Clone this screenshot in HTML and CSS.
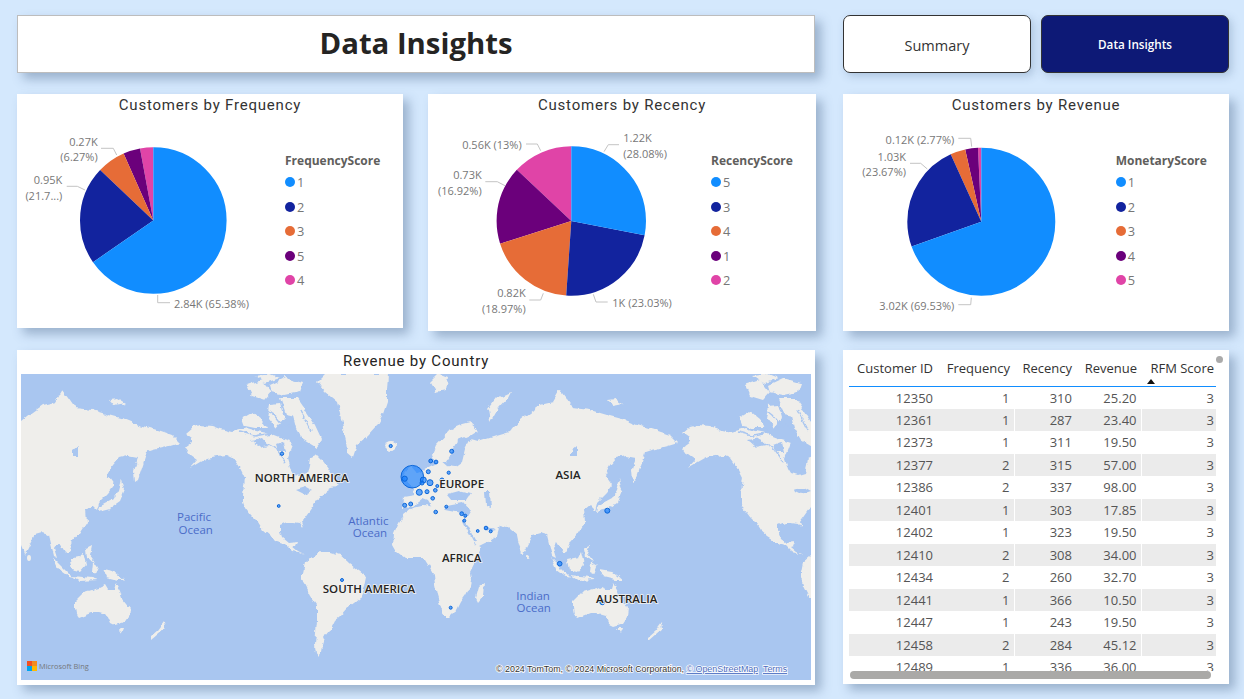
FILE: index.html
```html
<!DOCTYPE html>
<html lang="en">
<head>
    <meta charset="UTF-8">
    <meta name="viewport" content="width=device-width, initial-scale=1.0">
    <title>Data Insights</title>
    <link rel="stylesheet" href="styles.css">
</head>
<body>
    <div class="page">

        <div class="row row-top">
            <div class="page-title">Data Insights</div>
            <div class="nav-btn">Summary</div>
            <div class="nav-btn active">Data Insights</div>
        </div>

        <div class="row row-charts">
            <div class="card chart-card card-freq">
                <div class="card-title">Customers by Frequency</div>
                <div class="chart-body">
                    <svg class="pie pie-freq" viewBox="17 116 260 212">
                        <g transform="rotate(-90 153.3 220.5)">
                            <circle class="s-pink" cx="153.3" cy="220.5" r="36.65" stroke-width="73.3" pathLength="100" stroke-dasharray="2.9 100" stroke-dashoffset="-97.1"/>
                            <circle class="s-purple" cx="153.3" cy="220.5" r="36.65" stroke-width="73.3" pathLength="100" stroke-dasharray="3.75 100" stroke-dashoffset="-93.35"/>
                            <circle class="s-orange" cx="153.3" cy="220.5" r="36.65" stroke-width="73.3" pathLength="100" stroke-dasharray="6.27 100" stroke-dashoffset="-87.08"/>
                            <circle class="s-navy" cx="153.3" cy="220.5" r="36.65" stroke-width="73.3" pathLength="100" stroke-dasharray="21.7 100" stroke-dashoffset="-65.38"/>
                            <circle class="s-blue" cx="153.3" cy="220.5" r="36.65" stroke-width="73.3" pathLength="100" stroke-dasharray="65.38 100"/>
                        </g>
                        <polyline class="leader" points="101,148.3 113.3,148.3 116.7,155"/>
                        <polyline class="leader" points="66.7,186.3 77.3,186.3 85,190"/>
                        <polyline class="leader" points="157.7,295 157.7,302.7 170,302.7"/>
                        <text class="lbl end" x="97.7" y="145.7">0.27K</text>
                        <text class="lbl end" x="97.7" y="160.7">(6.27%)</text>
                        <text class="lbl end" x="62.3" y="183.7">0.95K</text>
                        <text class="lbl end" x="62.3" y="200">(21.7...)</text>
                        <text class="lbl" x="174" y="307.7">2.84K (65.38%)</text>
                    </svg>
                    <div class="legend">
                        <div class="legend-title">FrequencyScore</div>
                        <div class="legend-item"><span class="dot d-blue"></span>1</div>
                        <div class="legend-item"><span class="dot d-navy"></span>2</div>
                        <div class="legend-item"><span class="dot d-orange"></span>3</div>
                        <div class="legend-item"><span class="dot d-purple"></span>5</div>
                        <div class="legend-item"><span class="dot d-pink"></span>4</div>
                    </div>
                </div>
            </div>

            <div class="card chart-card card-rec">
                <div class="card-title">Customers by Recency</div>
                <div class="chart-body">
                    <svg class="pie pie-rec" viewBox="428 116 278 215">
                        <g transform="rotate(-90 571.3 221)">
                            <circle class="s-pink" cx="571.3" cy="221" r="37.35" stroke-width="74.7" pathLength="100" stroke-dasharray="13 100" stroke-dashoffset="-87"/>
                            <circle class="s-purple" cx="571.3" cy="221" r="37.35" stroke-width="74.7" pathLength="100" stroke-dasharray="16.92 100" stroke-dashoffset="-70.08"/>
                            <circle class="s-orange" cx="571.3" cy="221" r="37.35" stroke-width="74.7" pathLength="100" stroke-dasharray="18.97 100" stroke-dashoffset="-51.11"/>
                            <circle class="s-navy" cx="571.3" cy="221" r="37.35" stroke-width="74.7" pathLength="100" stroke-dasharray="23.03 100" stroke-dashoffset="-28.08"/>
                            <circle class="s-blue" cx="571.3" cy="221" r="37.35" stroke-width="74.7" pathLength="100" stroke-dasharray="28.08 100"/>
                        </g>
                        <polyline class="leader" points="604,151.7 608.3,144.7 619,144.7"/>
                        <polyline class="leader" points="526,144 537.3,144 540.7,150.7"/>
                        <polyline class="leader" points="485.3,181.7 497.3,181.7 505,185.7"/>
                        <polyline class="leader" points="529.3,300 540.7,300 543.3,293.3"/>
                        <polyline class="leader" points="593.3,294.3 596,302 607.7,302"/>
                        <text class="lbl" x="623.3" y="141.7">1.22K</text>
                        <text class="lbl" x="623.3" y="157.7">(28.08%)</text>
                        <text class="lbl end" x="521.7" y="148.7">0.56K (13%)</text>
                        <text class="lbl end" x="481.7" y="178.7">0.73K</text>
                        <text class="lbl end" x="481.7" y="194.7">(16.92%)</text>
                        <text class="lbl end" x="525.7" y="296.7">0.82K</text>
                        <text class="lbl end" x="525.7" y="312.7">(18.97%)</text>
                        <text class="lbl" x="612.3" y="307">1K (23.03%)</text>
                    </svg>
                    <div class="legend">
                        <div class="legend-title">RecencyScore</div>
                        <div class="legend-item"><span class="dot d-blue"></span>5</div>
                        <div class="legend-item"><span class="dot d-navy"></span>3</div>
                        <div class="legend-item"><span class="dot d-orange"></span>4</div>
                        <div class="legend-item"><span class="dot d-purple"></span>1</div>
                        <div class="legend-item"><span class="dot d-pink"></span>2</div>
                    </div>
                </div>
            </div>

            <div class="card chart-card card-rev">
                <div class="card-title">Customers by Revenue</div>
                <div class="chart-body">
                    <svg class="pie pie-rev" viewBox="843 116 267 215">
                        <g transform="rotate(-90 981.3 221.7)">
                            <circle class="s-pink" cx="981.3" cy="221.7" r="37" stroke-width="74" pathLength="100" stroke-dasharray="0.73 100" stroke-dashoffset="-99.27"/>
                            <circle class="s-purple" cx="981.3" cy="221.7" r="37" stroke-width="74" pathLength="100" stroke-dasharray="2.77 100" stroke-dashoffset="-96.5"/>
                            <circle class="s-orange" cx="981.3" cy="221.7" r="37" stroke-width="74" pathLength="100" stroke-dasharray="3.3 100" stroke-dashoffset="-93.2"/>
                            <circle class="s-navy" cx="981.3" cy="221.7" r="37" stroke-width="74" pathLength="100" stroke-dasharray="23.67 100" stroke-dashoffset="-69.53"/>
                            <circle class="s-blue" cx="981.3" cy="221.7" r="37" stroke-width="74" pathLength="100" stroke-dasharray="69.53 100"/>
                        </g>
                        <polyline class="leader" points="958.3,138.3 970.7,138.3 971.7,146.7"/>
                        <polyline class="leader" points="910,163.3 920.7,163.3 927.3,169"/>
                        <polyline class="leader" points="958.3,304.7 970.7,304.7 971.3,297.7"/>
                        <text class="lbl end" x="954.3" y="143.7">0.12K (2.77%)</text>
                        <text class="lbl end" x="906" y="160.7">1.03K</text>
                        <text class="lbl end" x="906" y="176">(23.67%)</text>
                        <text class="lbl end" x="954.3" y="309.7">3.02K (69.53%)</text>
                    </svg>
                    <div class="legend">
                        <div class="legend-title">MonetaryScore</div>
                        <div class="legend-item"><span class="dot d-blue"></span>1</div>
                        <div class="legend-item"><span class="dot d-navy"></span>2</div>
                        <div class="legend-item"><span class="dot d-orange"></span>3</div>
                        <div class="legend-item"><span class="dot d-purple"></span>4</div>
                        <div class="legend-item"><span class="dot d-pink"></span>5</div>
                    </div>
                </div>
            </div>
        </div>

        <div class="row row-bottom">
            <div class="card map-card">
                <div class="card-title">Revenue by Country</div>
                <svg class="map" viewBox="21 374 790 306">
                    <defs>
                        <filter id="rough" x="-2%" y="-2%" width="104%" height="104%" color-interpolation-filters="sRGB">
                            <feTurbulence type="fractalNoise" baseFrequency="0.11" numOctaves="3" seed="4" result="noise"/>
                            <feDisplacementMap in="SourceGraphic" in2="noise" scale="6" xChannelSelector="R" yChannelSelector="G"/>
                            <feGaussianBlur stdDeviation="0.35"/>
                        </filter>
                        <g id="world">
                            <!-- north america -->
                            <polygon class="land" points="185,433 192,427 200,425 212,426 220,429 233,432 247,428 257,431 267,433 280,438 287,440 293,442 290,450 287,458 290,468 293,473 300,475 307,473 309,465 310,458 317,455 323,461 328,468 334,477 338,487 332,488 326,492 320,495 317,501 312,508 307,515 302,522 304,528 300,523 293,522 287,522 280,525 280,531 282,537 288,542 298,541 296,546 293,547 299,552 305,555 299,553 294,552 287,545 278,542 270,537 262,530 257,522 251,516 245,508 243,502 243,495 244,486 245,478 240,468 233,458 227,455 217,456 207,458 200,462 190,468 197,460 190,455 185,448 192,443 192,438"/>
                            <polygon class="land" points="242,418 252,412 262,420 267,428 255,428 245,426"/>
                            <polygon class="land" points="247,385 262,380 272,392 265,400 252,396"/>
                            <polygon class="land" points="270,385 285,378 303,383 300,392 285,395 272,392"/>
                            <polygon class="land" points="280,398 298,398 305,408 300,418 286,415"/>
                            <polygon class="land" points="292,412 305,410 315,425 322,440 316,448 303,440 296,428"/>
                            <polygon class="land" points="270,405 280,404 284,418 276,428 268,418"/>
                            <polygon class="land" points="255,376 270,374 280,378 265,383"/>
                            <polyline class="channel" points="240,432 255,436 270,433"/>
                            <polyline class="channel" points="270,430 290,425 300,438"/>
                            <polyline class="channel" points="262,405 275,415 283,425"/>
                            <polyline class="channel" points="300,410 310,430"/>
                            <polyline class="channel" points="260,440 275,448 285,462"/>
                            <polygon class="water" points="250,440 262,438 268,445 258,447"/>
                            <polygon class="water" points="276,445 284,442 286,452 278,452"/>
                            <polygon class="water" points="296,490 306,487 313,491 304,494"/>
                            <!-- greenland, iceland -->
                            <polygon class="land" points="317,382 325,374 388,374 387,390 387,402 383,414 377,425 367,436 357,445 353,457 347,452 346,440 343,428 340,414 337,402 325,392"/>
                            <ellipse class="land" cx="391" cy="446" rx="6" ry="4"/>
                            <!-- south america -->
                            <polygon class="land" points="305,562 312,556 320,552 330,552 340,555 348,562 355,568 367,577 365,587 360,598 354,603 347,608 340,616 333,622 329,630 325,635 322,645 320,657 316,652 315,645 316,632 317,622 317,612 317,605 310,595 305,585 303,578 303,572"/>
                            <!-- africa -->
                            <polygon class="land" points="393,545 394,533 398,524 403,515 412,508 425,505 435,507 445,510 455,512 463,515 465,522 470,533 475,545 482,547 477,558 470,572 471,580 470,585 465,595 460,602 455,612 450,617 444,617 441,608 437,595 435,585 434,575 430,568 425,560 420,558 413,558 405,558 397,552"/>
                            <polygon class="land" points="479,587 484,584 483,596 478,602 476,598"/>
                            <!-- eurasia -->
                            <polygon class="land" points="402,508 403,497 415,495 413,487 405,478 420,472 435,465 440,460 447,466 455,467 462,462 465,450 470,440 477,442 493,437 510,432 520,420 530,412 540,405 553,402 560,390 566,398 573,408 590,410 607,415 622,419 637,425 655,430 670,435 678,443 668,446 660,448 651,450 645,452 641,465 636,480 633,482 632,470 636,458 625,456 617,458 610,466 605,475 612,485 606,493 597,502 595,510 590,505 584,510 585,522 578,533 570,542 566,552 563,552 557,542 553,548 556,558 552,556 547,535 540,533 533,535 528,545 523,555 519,545 517,535 508,527 500,525 497,535 487,542 477,547 471,535 465,518 470,510 463,502 452,504 447,505 443,512 438,512 433,508 428,500 423,498 418,502 412,506"/>
                            <polygon class="land" points="432,455 436,445 450,430 462,425 470,423 478,430 470,435 458,440 452,450 450,455 446,462 440,462 435,462"/>
                            <polygon class="land" points="404,472 410,465 416,472 419,482 410,484 403,480"/>
                            <polygon class="land" points="488,410 497,398 510,392 507,398 498,408 490,422"/>
                            <polygon class="land" points="430,382 438,374 448,378 446,390 436,392"/>
                            <polygon class="land" points="607,400 615,399 623,404 612,406"/>
                            <polygon class="land" points="632,430 640,432 638,440 631,437"/>
                            <polygon class="water" points="447,494 458,491 470,494 466,500 452,500"/>
                            <polygon class="water" points="485,492 490,492 491,508 486,506"/>
                            <polygon class="water" points="462,520 465,520 476,541 473,541"/>
                            <polygon class="water" points="485,525 496,531 492,532 486,530"/>
                            <polygon class="water" points="571,450 576,446 576,456 571,456"/>
                            <!-- japan, islands -->
                            <polygon class="land" points="612,498 617,490 620,478 623,490 618,502 608,509 596,512 597,506"/>
                            <polygon class="land" points="551,558 560,567 571,578 567,577 556,569"/>
                            <polygon class="land" points="568,560 578,558 581,552 584,565 578,572 570,570"/>
                            <polygon class="land" points="570,576 590,578 596,580 578,581"/>
                            <polygon class="land" points="584,548 590,545 588,555 593,562 585,558"/>
                            <polygon class="land" points="600,569 612,571 623,580 616,580 604,577"/>
                            <polygon class="land" points="591,562 597,566 594,574 590,572"/>
                            <ellipse class="land" cx="527" cy="558" rx="2" ry="3"/>
                            <!-- australia -->
                            <polygon class="land" points="573,602 583,592 597,588 603,585 606,590 611,590 613,583 618,592 620,598 628,608 627,617 623,623 613,626 609,624 605,615 598,613 590,613 577,618 574,614 573,608"/>
                            <polygon class="land" points="617,628 622,628 620,633"/>
                            <polygon class="land" points="662,622 663,628 656,634 648,641 648,637 656,630"/>
                        </g>
                    </defs>
                    <rect class="water" x="21" y="374" width="790" height="306"/>
                    <g class="world-copies">
                        <use href="#world" x="-498"/>
                        <use href="#world"/>
                        <use href="#world" x="498"/>
                    </g>

                    <text class="ocean" x="194" y="521">Pacific</text>
                    <text class="ocean" x="195.7" y="534">Ocean</text>
                    <text class="ocean" x="368.3" y="525">Atlantic</text>
                    <text class="ocean" x="370" y="537">Ocean</text>
                    <text class="ocean" x="533" y="600">Indian</text>
                    <text class="ocean" x="533.7" y="612">Ocean</text>

                    <circle class="bubble" cx="412.3" cy="476.7" r="11.3"/>
                    <circle class="bubble" cx="404.7" cy="478.7" r="2.6"/>
                    <circle class="bubble" cx="390.7" cy="446" r="1.6"/>
                    <circle class="bubble" cx="282" cy="453.7" r="1.7"/>
                    <circle class="bubble" cx="278.7" cy="506" r="1.4"/>
                    <circle class="bubble" cx="342" cy="580" r="1.5"/>
                    <circle class="bubble" cx="404.7" cy="505.3" r="2"/>
                    <circle class="bubble" cx="410.7" cy="504" r="2"/>
                    <circle class="bubble" cx="423.3" cy="480" r="3"/>
                    <circle class="bubble" cx="419.3" cy="492.3" r="3"/>
                    <circle class="bubble" cx="430" cy="482.7" r="3"/>
                    <circle class="bubble" cx="427" cy="491.7" r="2"/>
                    <circle class="bubble" cx="422" cy="483" r="2"/>
                    <circle class="bubble" cx="437.3" cy="486" r="1.5"/>
                    <circle class="bubble" cx="435.3" cy="490.3" r="1.8"/>
                    <circle class="bubble" cx="432.7" cy="498.3" r="1.8"/>
                    <circle class="bubble" cx="428.3" cy="471.7" r="2"/>
                    <circle class="bubble" cx="430.7" cy="461" r="1.9"/>
                    <circle class="bubble" cx="436" cy="462" r="1.9"/>
                    <circle class="bubble" cx="451.7" cy="451.3" r="2"/>
                    <circle class="bubble" cx="448.7" cy="472.7" r="1.6"/>
                    <circle class="bubble" cx="442" cy="480" r="2"/>
                    <circle class="bubble" cx="435.7" cy="512" r="1.8"/>
                    <circle class="bubble" cx="446.3" cy="506.7" r="1.5"/>
                    <circle class="bubble" cx="461.7" cy="513.7" r="1.9"/>
                    <circle class="bubble" cx="465.3" cy="515.7" r="1.5"/>
                    <circle class="bubble" cx="464.3" cy="520.7" r="1.5"/>
                    <circle class="bubble" cx="477.7" cy="531" r="1.4"/>
                    <circle class="bubble" cx="486" cy="528" r="1.8"/>
                    <circle class="bubble" cx="490.7" cy="531.3" r="1.5"/>
                    <circle class="bubble" cx="607.3" cy="510.7" r="2.5"/>
                    <circle class="bubble" cx="559.7" cy="563.7" r="2.3"/>
                    <circle class="bubble" cx="602.3" cy="602.3" r="2.4"/>
                    <circle class="bubble" cx="450.7" cy="607.7" r="1.5"/>

                    <text class="continent" x="301.6" y="482">NORTH AMERICA</text>
                    <text class="continent" x="369" y="593">SOUTH AMERICA</text>
                    <text class="continent" x="461.7" y="487.5">EUROPE</text>
                    <text class="continent" x="568" y="478.5">ASIA</text>
                    <text class="continent" x="461.7" y="562">AFRICA</text>
                    <text class="continent" x="626.7" y="602.5">AUSTRALIA</text>

                    <rect class="ms-red" x="27" y="661" width="5" height="5"/>
                    <rect class="ms-green" x="32" y="661" width="5" height="5"/>
                    <rect class="ms-blue" x="27" y="666" width="5" height="5"/>
                    <rect class="ms-yellow" x="32" y="666" width="5" height="5"/>
                    <text class="bing" x="39" y="669">Microsoft Bing</text>

                    <text class="attrib" x="496" y="672">© 2024 TomTom, © 2024 Microsoft Corporation, <tspan class="attrib-link">© OpenStreetMap</tspan></text>
                    <text class="attrib attrib-link" x="763" y="672">Terms</text>
                </svg>
            </div>

            <div class="card table-card">
                <div class="table-wrap">
                    <table class="rfm-table">
                        <thead>
                            <tr>
                                <th class="col-id">Customer ID</th>
                                <th class="col-freq">Frequency</th>
                                <th class="col-rec">Recency</th>
                                <th class="col-rev">Revenue</th>
                                <th class="col-score">RFM Score<span class="sort-arrow"></span></th>
                            </tr>
                        </thead>
                        <tbody>
                            <tr><td>12350</td><td>1</td><td>310</td><td>25.20</td><td>3</td></tr>
                            <tr><td>12361</td><td>1</td><td>287</td><td>23.40</td><td>3</td></tr>
                            <tr><td>12373</td><td>1</td><td>311</td><td>19.50</td><td>3</td></tr>
                            <tr><td>12377</td><td>2</td><td>315</td><td>57.00</td><td>3</td></tr>
                            <tr><td>12386</td><td>2</td><td>337</td><td>98.00</td><td>3</td></tr>
                            <tr><td>12401</td><td>1</td><td>303</td><td>17.85</td><td>3</td></tr>
                            <tr><td>12402</td><td>1</td><td>323</td><td>19.50</td><td>3</td></tr>
                            <tr><td>12410</td><td>2</td><td>308</td><td>34.00</td><td>3</td></tr>
                            <tr><td>12434</td><td>2</td><td>260</td><td>32.70</td><td>3</td></tr>
                            <tr><td>12441</td><td>1</td><td>366</td><td>10.50</td><td>3</td></tr>
                            <tr><td>12447</td><td>1</td><td>243</td><td>19.50</td><td>3</td></tr>
                            <tr><td>12458</td><td>2</td><td>284</td><td>45.12</td><td>3</td></tr>
                            <tr><td>12489</td><td>1</td><td>336</td><td>36.00</td><td>3</td></tr>
                        </tbody>
                    </table>
                </div>
                <div class="scroll-v"></div>
                <div class="scroll-h"></div>
            </div>
        </div>

    </div>
</body>
</html>
```

FILE: styles.css
```css
* {
    box-sizing: border-box;
}

html, body {
    margin: 0;
    height: 100%;
    overflow: hidden;
}

body {
    background-color: #d4e8fd;
    font-family: "Open Sans", "Noto Sans", sans-serif;
    color: #333;
}

.page {
    padding: 15px 0 0 17px;
}

.row {
    display: flex;
    align-items: flex-start;
}

.row-top {
    height: 58px;
    gap: 10px;
}

.row-charts {
    margin-top: 21px;
    gap: 25px;
}

.row-bottom {
    margin-top: 19px;
    gap: 28px;
}

.card {
    background-color: #fff;
    box-shadow: 6px 6px 10px rgba(60, 90, 130, 0.38);
}

/* top bar */
.page-title {
    width: 798px;
    height: 58px;
    margin-right: 18px;
    background-color: #fff;
    border: 1px solid #bdbdbd;
    box-shadow: 6px 6px 10px rgba(60, 90, 130, 0.38);
    font-size: 29.3px;
    font-weight: 700;
    line-height: 54px;
    text-align: center;
    color: #252423;
}

.nav-btn {
    width: 188px;
    height: 58px;
    border: 1px solid #333;
    border-radius: 7px;
    background-color: #fff;
    box-shadow: 3px 3px 8px rgba(60, 90, 130, 0.25);
    font-size: 14.5px;
    line-height: 59px;
    text-align: center;
    color: #333;
}

.nav-btn.active {
    background-color: #0d1976;
    font-size: 11.7px;
    font-weight: 600;
    line-height: 57px;
    color: #fff;
}

/* chart cards */
.card-title {
    height: 22px;
    font-family: Roboto, "Liberation Sans", sans-serif;
    font-size: 15px;
    line-height: 22px;
    letter-spacing: 0.8px;
    text-align: center;
    color: #333;
}

.card-freq {
    width: 386px;
    height: 234px;
}

.card-rec {
    width: 388px;
    height: 237px;
    margin-right: 2px;
}

.card-rev {
    width: 386px;
    height: 237px;
}

.chart-body {
    display: flex;
}

.pie {
    flex: none;
}

.pie-freq {
    width: 260px;
    height: 212px;
}

.pie-rec {
    width: 278px;
    height: 215px;
}

.pie-rev {
    width: 267px;
    height: 215px;
}

.s-blue, .s-navy, .s-orange, .s-purple, .s-pink {
    fill: none;
}

.s-blue { stroke: #118dff; }
.s-navy { stroke: #12239e; }
.s-orange { stroke: #e66c37; }
.s-purple { stroke: #6b007b; }
.s-pink { stroke: #e044a7; }

.leader {
    fill: none;
    stroke: #c4c4c4;
    stroke-width: 1;
}

.lbl {
    font-size: 11px;
    fill: #777;
}

.lbl.end {
    text-anchor: end;
}

.legend {
    padding: 36px 0 0 8px;
    font-size: 12.8px;
    color: #777;
}

.card-rec .legend {
    padding-left: 5px;
}

.card-rev .legend {
    padding-left: 5.7px;
}

.legend-title {
    height: 18px;
    font-size: 12px;
    font-weight: 700;
    line-height: 18px;
    color: #605e5c;
}

.legend-item {
    display: flex;
    align-items: center;
    height: 24.5px;
}

.dot {
    width: 10px;
    height: 10px;
    margin-right: 2px;
    border-radius: 50%;
}

.d-blue { background-color: #118dff; }
.d-navy { background-color: #12239e; }
.d-orange { background-color: #e66c37; }
.d-purple { background-color: #6b007b; }
.d-pink { background-color: #e044a7; }

/* map */
.map-card {
    width: 798px;
    height: 335px;
    padding: 0 4px 5px;
}

.map-card .card-title {
    height: 24px;
    line-height: 22px;
    color: #252423;
}

.map {
    display: block;
    width: 790px;
    height: 306px;
}

.water {
    fill: #a9c6f0;
}

.land {
    fill: #efeeeb;
}

.channel {
    fill: none;
    stroke: #a9c6f0;
    stroke-width: 1.4;
}

.world-copies {
    filter: url(#rough);
}

.continent {
    font-size: 11.5px;
    font-weight: 600;
    text-anchor: middle;
    fill: #252423;
    stroke: #f2f2f0;
    stroke-width: 1.5px;
    paint-order: stroke;
}

.ocean {
    font-size: 11.5px;
    text-anchor: middle;
    fill: #4b6cc8;
}

.bubble {
    fill: rgba(17, 125, 255, 0.65);
    stroke: #0c66d8;
    stroke-width: 1;
}

.ms-red { fill: #f25022; }
.ms-green { fill: #f28c22; }
.ms-blue { fill: #00a4ef; }
.ms-yellow { fill: #ffb900; }

.bing {
    font-size: 7.4px;
    fill: #74777c;
}

.attrib {
    font-family: "Liberation Sans", sans-serif;
    font-size: 8.9px;
    fill: #333;
    stroke: #fff;
    stroke-width: 1.5px;
    paint-order: stroke;
}

.attrib-link {
    fill: #4a6cc0;
    text-decoration: underline;
}

/* table */
.table-card {
    position: relative;
    width: 386px;
    height: 334px;
    padding-left: 6px;
}

.table-wrap {
    width: 367px;
    height: 321px;
    overflow: hidden;
}

.rfm-table {
    width: 367px;
    table-layout: fixed;
    border-collapse: collapse;
    font-size: 13px;
}

.rfm-table th {
    position: relative;
    height: 36px;
    padding: 0 4px 0 0;
    border-bottom: 1px solid #118dff;
    font-weight: 400;
    text-align: right;
    color: #333;
    white-space: nowrap;
}

.col-id { width: 88px; }
.col-freq { width: 77px; }
.col-rec { width: 62px; }
.col-rev { width: 65px; }
.col-score { width: 75px; }

.rfm-table th.col-score, .rfm-table td:last-child {
    padding-right: 2px;
}

.sort-arrow {
    position: absolute;
    left: 6px;
    bottom: 2px;
    border-left: 4.5px solid transparent;
    border-right: 4.5px solid transparent;
    border-bottom: 5px solid #111;
}

.rfm-table td {
    height: 22.5px;
    padding: 0 4px 0 0;
    text-align: right;
    color: #555;
}

.rfm-table td:nth-child(3), .rfm-table td:nth-child(5) {
    border-left: 1px solid #fff;
}

.rfm-table tbody tr:nth-child(even) {
    background-color: #ebebeb;
}

.scroll-v {
    position: absolute;
    top: 6px;
    right: 6px;
    width: 7px;
    height: 7px;
    border-radius: 50%;
    background-color: #aaa;
}

.scroll-h {
    position: absolute;
    left: 7px;
    top: 321px;
    width: 361px;
    height: 8px;
    border-radius: 4px;
    background-color: #aaa9a7;
}
```
